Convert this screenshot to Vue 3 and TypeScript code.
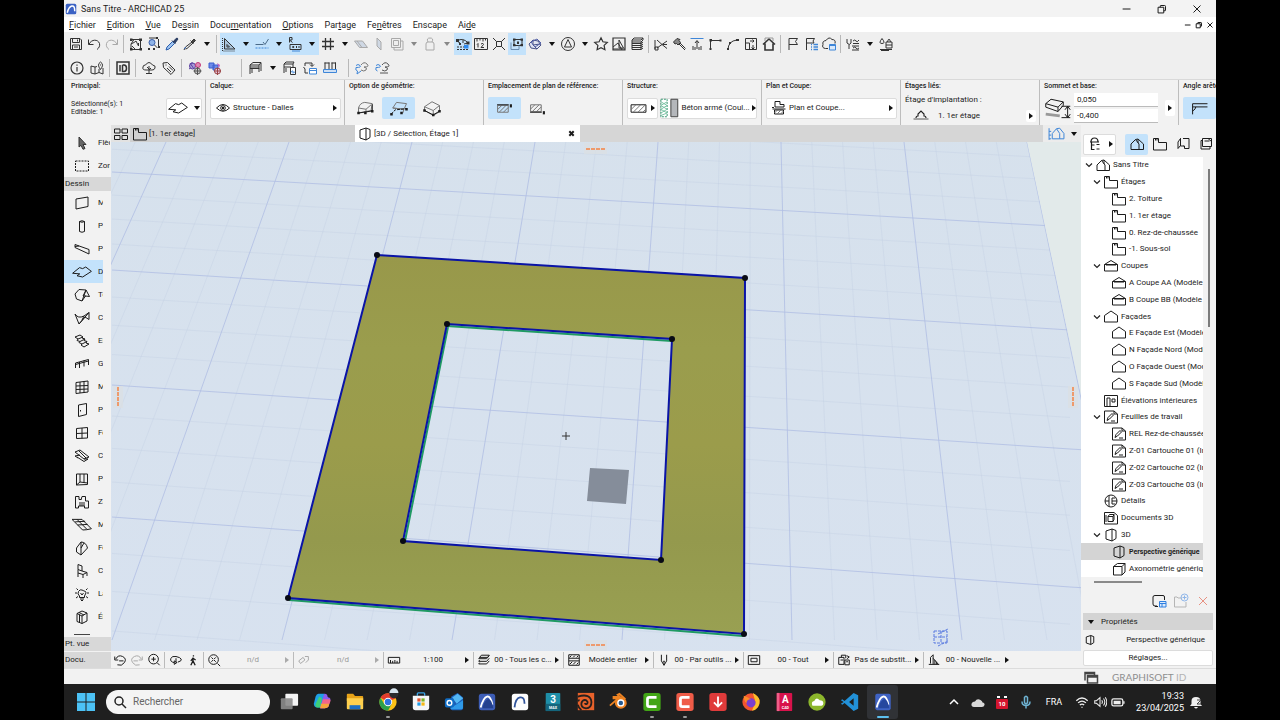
<script setup lang="ts">
import { h } from 'vue'

const P = (d: string, extra = '') => `<path d="${d}" ${extra}/>`
const BLUE = 'stroke="#3f86d8"'
const SOLID = 'fill="currentColor" stroke="none"'

const icons: Record<string, string> = {
  // window controls
  min: P('M3 8h9'),
  restore: P('M3.5 6h6.500v6.500h-6.500zM6 6V4.500Q6 4 6.500 4H11q1 0 1 1v4.500q0 .5-.5 .5H10'),
  close: P('M4 4l8 8M12 4l-8 8'),
  bigclose: P('M3 3l10 10M13 3l-10 10'),
  // standard toolbar
  save: P('M2.500 2.500h9.500l1.500 1.500v9.500h-11zM4.500 2.500v4h7v-4M4.500 13.500v-4.500h7v4.500M6 11h4M9.500 3.500v2'),
  undo: P('M2.500 3.500v5h5M3 8.200C5.500 3 12 3 13.500 7.500c.6 2.500-.5 4.500-2.500 6'),
  redo: P('M13.500 3.500v5h-5M13 8.200C10.500 3 4 3 2.500 7.500c-.6 2.500.5 4.500 2.500 6'),
  edit: P('M4 3.500h8M12.500 5v8M4 13.500h8M3 8v5M6 3.500L3 8l3-1.500 2-1.500 1 2 1.500 3V7M4 10l3 3') + P('M2 2.500h2.500v2.500H2zM11 2.500h3V5h-3zM2 12h2.500v2.500H2zM11.500 12H14v2.500h-2.500z', SOLID),
  findsel: P('M6 6.500m-3 0a3 3 0 1 0 6 0a3 3 0 1 0 -6 0', 'fill="#8fb4e8" stroke="#3a5ea8"') + P('M3 2h8M12.500 3v8M8.500 9l3 3') + P('M10 1h2v2h-2zM12 10h2v2h-2zM2 12h2v2H2zM7 12h2v2H7z', SOLID),
  pick: P('M2 14l1-3 5.500-5.500 2 2L5 13z', 'fill="#9fc4f0" stroke="#2c5fae"') + P('M8 4.500l3.500 3.500M9 6l3-3.500q1.500-1 2 .5L11 7', 'fill="#2b3e63" stroke="#2b3e63"'),
  inject: P('M2 14l1.500-3L10 6M3.500 13L5 12.500 11 7M8.500 4.500l3 3') + P('M9 6l3-3 1.500 1.500L11 7z', 'fill="#444"') + P('M2 13l2-2', 'stroke="#2c5fae"'),
  setsq: P('M3.500 2.500v10.500h10.500zM6 8.500v2.500h2.500z', 'fill="#a9c4dc" fill-rule="evenodd"') + P('M1.500 2v13h13', 'stroke-dasharray="1 1"'),
  guide: P('M1.500 8.500h8M9 6l2 2.500 3.500-5.500', 'stroke="#4a6a88"') + P('M1.500 12h13', 'stroke-dasharray="2 1" stroke="#3f86d8"'),
  coord: P('M2.500 1.500v5M2.500 1.500h2.500v2.500H2.500l3 2.500M3 8.500h11v5H3zM5.500 10l1.500 2M7 10l-1.500 2M9.500 10v2M12 10v2') + P('M5 15h8', BLUE),
  grid: P('M5.500 2v12M10.500 2v12M2 5.500h12M2 10.500h12', 'stroke-width="1.300"'),
  plane1: P('M1.500 5h8l5 6.500h-8zM4 5l5 6.500', 'fill="#cfd8e4"'),
  plane2: P('M6 2l4 4v8L6 10z', 'fill="#cfd8e4"'),
  layers: P('M2.500 2.500h9v9h-9zM5 11.500V14h9V5h-2.500M4.500 4.500h5v5h-5z'),
  lock: P('M4 8q0-2 2-2h4q2 0 2 2v6H4zM6 6q-2-4 2-4t2 4'),
  suspend: P('M2 5q6-4 11 2M2 5l3 2M8 4v3M13 7l-4 1') + P('M1 3h3v3H1zM11.500 5.500h3v3h-3zM4 7h2v2H4z', SOLID) + P('M2 11h8M2 13.500h12', 'stroke-dasharray="2 1"') + P('M9 9h4.500v3.500H9z', 'fill="#2f8cf0" stroke="none"'),
  measure: P('M1.500 2.500h13v11h-13zM4 2.500v3M7 2.500v2M10 2.500v3M12.500 2.500v2M4 8.500l1-1v4M8 8q2.500-1.500 2.500.5L8 11.500h3'),
  snap: P('M5.500 5.500h5v5h-5zM2 2l3.500 3.500M14 2l-3.500 3.500M2 14l3.500-3.500M14 14l-3.500-3.500'),
  group: P('M5 3.500h8v6H5z') + P('M2 6.500v7h8v-4', 'stroke="#6b8db0"') + P('M4 2.500h2.500v2.300H4zM11.500 2.500H14v2.300h-2.500zM4 8h2.500v2.300H4zM11.500 8H14v2.300h-2.500zM8 5.500h2V8H8z', SOLID),
  cutplane: P('M2 8l4-4 5 1 3 4-4 4-6-1zM6 4v5l4 4M6 9l7-1', 'stroke="#4a5488" fill="#dfe3f2"') + P('M4 6l6-3 4 4-6 4z', 'stroke="#5361a8"'),
  north: P('M8 8m-6.500 0a6.500 6.500 0 1 0 13 0a6.500 6.500 0 1 0 -13 0M8 3.500l3.500 7.500h-7z'),
  star: P('M8 1.800l1.900 4 4.400.6-3.200 3 .8 4.300L8 11.600l-3.900 2.100.8-4.300-3.200-3 4.400-.6z', 'stroke-width="1.200"'),
  pic: P('M2 2h12v12H2z', 'stroke-width="1.200"') + P('M2 11l5-4 4 7M8 4v8h4.500zM2 13h12'),
  stack: P('M3 4l2-2h9l-2 2zM3 4v2h9l2-2V2M3 7.500h9l2-1.500M3 9.500h9l2-1.500M3 11.500h9l2-1.500M3 13.500h9l2-1.500M3 6v7.500M12 6v7.500'),
  cut: P('M4 4l5 4.500L14 5M4 12l5-3.500 5 4M10 8.500h4M2 4v9') + P('M2 11h3v3H2z'),
  hammer: P('M6.500 6.500L14 14M8 6l6.500 6.500') + P('M2.500 6L6 2.500l3 1-1 1 1.500 2-2.500 2.500L5.500 7.500 4 8z', 'fill="#888"'),
  elev: P('M1.500 2.500h13', BLUE) + P('M8 13V5M6 7l2-2.500L10 7M4 10v4M6 11v3M10 11v3M12 10v4'),
  corner: P('M3.500 14V4.500H14') + P('M2.500 3h2.500v2.500H2.500zM12.500 3.500h2v2h-2zM2.500 12h2v2h-2z', SOLID),
  arc: P('M3 14Q3 5 12 4') + P('M2 12h2v2H2zM11 3h3v2h-3zM4 6h2v2H4z', SOLID),
  resize: P('M2.500 2.500h11v11h-11zM2.500 7h4v6.500M7 5h4M9.500 3.500L11 5 9.500 6.500M10 9v4M8.500 11.500L10 13l1.500-1.500'),
  home: P('M2 8.500L8 3l6 5.500M4 7.500V14h8V7.500', 'stroke-width="1.600"') + P('M4 5V2h8v3', 'stroke="#999"'),
  flag: P('M4 14V2.500h8.500l-2 3 2 3H4'),
  flaglist: P('M3.500 14V2.500h8l-1.500 2.500 1 2H3.500') + P('M8 8.500h1M10.500 8.500H15M8 11h1M10.500 11H15M8 13.500h1M10.500 13.500H15', 'stroke="#3f86d8" stroke-width="1.500"'),
  cloudissue: P('M7 12.500H4.500q-4-.5-2.500-4Q1 5 5 4.500 8 0 11 3.500q4 0 3 4') + P('M8.500 8.500h6v5.500h-6z', 'fill="#d9e9fb" stroke="#3f86d8"') + P('M8.500 9.500h6', BLUE),
  tuning: P('M2 3v4q2.500 3 4 0V3M4 8.500V13M8 5q2-2 3 0t3-1M8 7.500h6M7 10h7M8 12q2-2 3 0t3 0M7 14h7'),
  paint: P('M4 2.500q-4 5 0 5t0-5M8 6h6v6H8zM9.500 6q1.500-6 3 0M8 9h6M2 13.500h12M3 14.500h8'),
  // second toolbar
  info: P('M8 8m-6 0a6 6 0 1 0 12 0a6 6 0 1 0 -12 0M8 7v4.500M8 4.500v1.200', 'stroke-width="1.200"'),
  mappin: P('M2 6l4 1v7l-4-1zM6 14l4-1.500V9M10 12.500l4 1.500V8M6 7l2-.5M11.500 9.500q-4-5 0-7.500 4 2.500 0 7.500M11.500 4.500v1'),
  id: P('M2 2h12v12H2z', 'stroke-width="1.500"') + P('M5 5v6.500M7.500 5v6.500h1.500q2.500 0 2.500-3.200T9 5H7.500', 'stroke-width="1.500"'),
  tree: P('M5 10q-4 0-3-3 0-2 2.500-2Q8 0 11.500 5 15 5.500 14 8q-.5 2-3 2zM8 6v7M8 10l2-2M8 9L6 7M5 13.500h6'),
  tag: P('M2 3l4.500-.5L14 10l-4 4.500L2.500 7.500zM4.500 5h1M6 8l4 4M8 6.500l4 4'),
  gears1: P('M5.500 6m-3 0a3 3 0 1 0 6 0a3 3 0 1 0 -6 0M5 2v2M2 9l1.500-1M3 3l4 6', 'stroke="#5a3fa0" fill="#a99bd8"') + P('M11 5m-2.500 0a2.500 2.500 0 1 0 5 0a2.500 2.500 0 1 0 -5 0', 'stroke="#c43a7a" fill="#e08ab4"') + P('M10.500 11m-3 0a3 3 0 1 0 6 0a3 3 0 1 0 -6 0M10.500 7v8M6.500 11h8', 'stroke="#555" fill="#ccc"'),
  gears2: P('M2 3h5v5H2zM6 5h5v5H6z', 'stroke="#3b5fd0" fill="#6f8be8"') + P('M10 3l3 2-1 3z', 'fill="#c060c0" stroke="none"') + P('M10.500 11m-3 0a3 3 0 1 0 6 0a3 3 0 1 0 -6 0M7 11h7M10.500 8v7', 'stroke="#944" fill="#e6c4dc"'),
  desk: P('M3 5l3-2.500h8L12 5zM3 5v9M3 8.500h9V5M12 8v4M14 3v8M5 9v4M3 7h9'),
  deskdoc: P('M2 4l2-2h8l-1 2zM2 4v9M2 7h7M4 8v4M11 4v3') + P('M8.500 7.500h5v7h-5z', 'fill="#fff"') + P('M10.500 10.500L9.500 12h3L11 13.500', BLUE),
  swap: P('M3 6V3h7v3M8 4.500L10 6.500l2-2M3 9l-1.500-2M3 9v4h3') + P('M7.500 8.500h7v5.500h-7zM7.500 10.500h7', 'fill="#fff" stroke="#3f86d8"'),
  tubes: P('M3 2.500v10M7 2.500v10M10 2.500v10M13.500 2.500v10M2.500 3h5M9.500 3H14') + P('M1.500 9.500h13v3h-13z', 'fill="#cfe0f4" stroke="#3f86d8"'),
  link1: P('M7 5q3-4 6-1t-3 3q4 1 2 3t-5 0', 'stroke="#777"') + P('M2 5.500q2-2 4 0t-4 2q-1 3 1.500 3.500L3 14l4-3', BLUE),
  link2: P('M8 5q3-4 6-1t-3 3q4 1 2 3t-5 0M6 13h8', 'stroke="#555"') + P('M2 5.500q2-2 4 0t-4 2q-1 3 1.500 3.500', BLUE),
  // element and placement icons
  slab: P('M.5 9L6 4.500l2.500.800L11 4l4.500 3.500L8.500 12l-4.500-1 2.200-1.500z'),
  eye: P('M1.500 8q6.500-7 13 0-6.500 6.500-13 0zM8 8m-2.300 0a2.300 2.300 0 1 0 4.600 0a2.300 2.300 0 1 0 -4.600 0') + P('M7 7h2v2H7z', SOLID),
  geo1: P('M2 8q1-4 5-4.500l6 1-1 5.500M2 8l6 1 4-3.500M2 8v4l10-2M8 9v2', 'stroke="#777"') + P('M2 12l10-1.500M13 5v6') + P('M1 11h2v2H1zM6.500 11h2v2h-2zM12 9.500h2v2h-2z', SOLID),
  geo2: P('M3 8l3-4.500 8 1L12 9zM3 8l9 1-1 3', 'stroke="#777"') + P('M1.500 13L5 9.500l9-1', 'stroke-dasharray="3 1"') + P('M1 12h2v2H1zM13 8h2v2h-2zM9 11h2v2H9z', SOLID),
  geo3: P('M2 7l6-4 6 3-5 4zM2 7v3l7 4V10M14 6v5L9 14', 'stroke="#777"') + P('M2 10l7 3.500 5-3') + P('M1 9h2v2H1zM8 12.500h2v2H8zM13 9.500h2v2h-2z', SOLID),
  hatchtop: P('M1.500 5h10v6.500h-10zM1.500 9l4-4M3 11.500L9.500 5M7 11.500L11.500 7', 'stroke="#777"') + P('M1 4.500H12') + P('M13 4h2v3h-2z', SOLID),
  hatchbot: P('M1.500 4.500h10v6.500h-10zM1.500 8.500l4-4M3 11L9.500 4.500M7 11l4.500-4.500', 'stroke="#777"') + P('M1 11.500H12') + P('M13 10.500h2v3h-2z', SOLID),
  hatch: P('M1 4.500h14v7H1z') + P('M1 9l4.500-4.500M3 11.500l7-7M7.500 11.500l7-7M12 11.500l3-3', 'stroke="#777"'),
  mat: P('M1.500 1h5v14h-5z', 'stroke="#3e9a76" stroke-dasharray="2 1"') + P('M1.500 3l5 3-5 3 5 3-5 2M6.500 3l-5 3 5 3-5 3', 'stroke="#7cc4a6"') + P('M9.500 1h5.500v14H9.500z', 'fill="#b4b7bb" stroke="#444"'),
  plansec: P('M4 1.500h5v3h4v2.500H4zM1 7.500h2M1.500 9h13M3.500 10h9v4h-9z') + P('M3.500 13l3-3M6 14l4-4M9.500 14l3-3', 'stroke="#777"'),
  story: P('M3 10q0-2 2-2V6l3-3 3 3v2q2 0 2 2', 'stroke-width="1.100"') + P('M.5 11h15', 'stroke="#888" stroke-width="1.500"'),
  height: P('M1 5.500L4 3l7 1.500-3 3zM1 5.500v2l7 2.500v-2.500M11 4.500v2L8 10') + P('M1 11.500l8 1', 'stroke="#999" stroke-width="3"') + P('M10 7h5M10 13.500h5M13.500 7v6.500M12 9L13.500 7 15 9M12 11.500l1.500 2 1.500-2'),
  edge: P('M1.500 3.500h14M1.500 6.500h14M1.500 3.500v10M4.500 6.500q0 2-3 4'),
  tiles: P('M1.500 3h5.500v4H1.500zM9 3h5.500v4H9zM1.500 9.500h5.500v4H1.500zM9 9.500h5.500v4H9z'),
  storytab: P('M1.500 2.500h5v4h8v7.500h-13zM3.500 2.500v2M5 2.500v2'),
  box3d: P('M3 4l6-2v12l-6-2zM9 2l4 1.500v8L9 14'),
  navhouse: P('M4 13V8l4-4.500L11 8v5zM8 3.500l3-.5 4 5v5h-4M1 3v11M1 6h2M1 9.500h2M1 13h2', BLUE),
  // toolbox
  arrow: P('M5 2l7 7.500H9l2 4-2 .8-2-4L5 12z', 'fill="#666" stroke="#333"'),
  marquee: P('M1.500 3h13v10h-13z', 'stroke-dasharray="2 1"'),
  wall: P('M2 4l12-2v9.500L2 14z'),
  column: P('M5.500 3.500v10q2.500 1.500 5 0v-10q-2.500-1.500-5 0 2.500 1.500 5 0'),
  beam: P('M1 3.500l14 5v4.500L1 6.500zM1 5.500l4-.5'),
  roof: P('M1 7l4-4.500 7 .5 3.500 6.500-4-.5L8 14l-5.500-2zM12 3L8 14M12 3l-3 6h3'),
  shell: P('M1 4q3 5 9 2l5-3.500v7L11 7l-6 7zM15 2.500L5 14M10 6L8 10'),
  stair: P('M1 4l5-2 3 2-1 1 3 1-1 1.500 3 1-1 1.500 3 1-5 3-3-2 1-1-3-1.500 1-1L3 7.500 4 6zM4 6l5-2M6 8.500l5-2.500M8 11l5-2.500'),
  rail: P('M1.500 12V7L14.500 3.500V9M5.500 6v6M10 4.500v6M1.500 8.500L14.500 5'),
  curtain: P('M2 3.500L14 2v11L2 14.500zM6 3v11M10 2.500v11M2 7l12-.5M2 10.500l12-.5'),
  door: P('M4.500 3l8-1.500v11l-8 2zM6.500 8v1.500'),
  window: P('M2.500 3.500l11-1V13l-11 .5zM8 3v10.500M2.500 8.500l11-.5'),
  skylight: P('M1 4l5-2 9 7-5 2zM1 8l5-1M10 11l4 0M3 9l7 4.500 4-2.500M1 8l3 2M5 3l7 7'),
  opening: P('M2.500 3h11v10.500l-11 .5zM6 3v8l7.500 1M6 11l-3.500 3M10 3v8.500'),
  zone: P('M1.500 2.500h3.500v3h2M1.500 2.500V14h3v-2h6v2h4V7h-3V2.500h-3.500L7 6M5 9h6M5 11h6'),
  mesh: P('M0 3.500q4 0 8 0l7.500 7.500q-4 1-7 1zM4 3.500l8 8M2.500 5.500l8-.5M4.500 8l8-.5'),
  morph: P('M7 2L2.500 8v4l4.500 3V8zM7 2q5 0 6.500 6L7 15M7 8l3-5'),
  chair: P('M4 1.500l4 1.500v5L4 6.500zM4 6.500V14M8 8l5 1.500M4 10l5 1.500 4-2V13M9 11.500V15'),
  lamp: P('M5.500 10Q3 8 4.500 5.500T8 4t3.500 1.500-1 4.500v1.500h-5zM6 13h4M7 14.500h2M1 7h2M13 7h2M2.500 2.500L4 4M13.500 2.500L12 4M2 12l2-1.500M14 12l-2-1.500M6.500 7L8 9l1.500-2'),
  element: P('M3 4.500L8 2l5 2v8L8 14.500 3 12.500zM3 4.500L8 7l5-3M8 7v7.500M5.500 5.500v8M5 3.500L10 6'),
  // navigator
  navtop: P('M4 6q0-4 3.500-4T11 6M3 6h9M4.500 9h3M4.500 6v7.500h3M9.500 8.500h3M9.500 13h3', 'stroke-width="1.200"'),
  house: P('M2 13.500V8l4.500-4.500L10 8v5.500zM6.500 3.500L9 3l5.500 5v5.500H10M9 3v4'),
  layoutbook: P('M3 12.500V6l2.500-3.500V9.500L3 12.500M5.500 2.500V10H9M8 2.500h6v10H9.500M9.500 12.500v-2.500h-1'),
  publish: P('M4.500 2.500h9v8h-9zM4.500 4.500H3v8.500h9v-2.500M6.500 5h5M10 2.500l3.500 3'),
  section: P('M1.500 6.500L8 2.500l6.500 4V13h-13zM3 7h10M1.500 6.500h13'),
  facade: P('M1.500 6.500L8 2l6.500 4.500V13h-13z'),
  interior: P('M1.500 2.500h13v11h-13zM4 5h3v8.500M4 5v8.500M9 6h3v3H9z'),
  sheet: P('M1.500 2h9.500l3.500 3v9h-13zM11 2v3h3.500M4 11.500l1-3 4-4 1.500 1.500-4 4zM8 12h4'),
  detail: P('M8 8m-6 0a6 6 0 1 0 12 0a6 6 0 1 0 -12 0M6 2.500v11M9 5v6M9 8h5M9 5h3.500M9 11h3.500M2 8h4'),
  doc3d: P('M1.500 2.500H11l3.500 3V14h-13zM5 6.500h5v5H5zM5 6.500l1.500-2H11l-1 2M11 4.500v5L10 11.500M3 5v7'),
  axo: P('M2.500 5.500l4-3h7.500l-3 3zM2.500 5.500V14H11V5.500M14 2.500V11l-3 3'),
  viewnew: P('M6 13H4q-2 0-2-2V4q0-1.500 2-1.500h8q1.500 0 1.500 1.500v3M4 13.500h3') + P('M8.500 8.500H15V14H8.500zM8.500 10.500H15M11 10.500V14', 'stroke="#2f7fe0" fill="#dcebfc"'),
  foldernew: P('M9 5H5L4 4H1.500v10H13V9') + P('M11.500 4.500m-3.500 0a3.500 3.500 0 1 0 7 0a3.500 3.500 0 1 0 -7 0M11.500 2.500v4M9.500 4.500h4', 'stroke="#8eb6ea"'),
  windows: P('M4.500 6.500h10V14h-10zM4.500 8h10M2 11.500V3.500h9.500V6M2 4.500h9.500', 'stroke-width="1.500"'),
  // view bar
  zback: P('M2 4v4h4M3 7Q6 1.500 11 4t2 7-8 2.500M7 9h5'),
  zfwd: P('M14 4v4h-4M13 7Q10 1.500 5 4T3 11t8 2.500M4 9h5'),
  zin: P('M7.500 7m-5.500 0a5.500 5.500 0 1 0 11 0a5.500 5.500 0 1 0 -11 0M11.500 11l3 3M7.500 4.500v5M5 7h5'),
  orbit: P('M6 11Q1 10 2 6.500T8 4t6 3-4 3.500M6 9v4l3-2zM8 6v5'),
  walk: P('M8.500 2.500v1.500M8 5v4l-2.500 5M8 9l2.500 5M8 6L5.500 9M8 6l3 2', 'stroke-width="1.300"'),
  fit: P('M7.500 7.500m-5.500 0a5.500 5.500 0 1 0 11 0a5.500 5.500 0 1 0 -11 0M12 12l3 3M5 5l2 2M10 5L8 7M5 10l2-2M10 10L8 8'),
  rotate: P('M2 9l5-4 2 3-5 4zM9 4h4v4M13 8l-3 3'),
  scale: P('M1.500 5h13v6.500h-13zM4 8v3.500M6.500 9v2.500M9 8v3.500M11.500 9v2.500'),
  sheets: P('M3 5l2-2.500h9L12 5zM3 8l-1 1.500h9L14 6M3 11l-1 1.500h9L14 9M3 5l-1 1.500h9L14 3'),
  cells: P('M2 2h12v12H2z') + P('M2 6h12M2 9h12M3 5l2-2M7 5l2-2M11 5l2-2M3 13l3-3M7 13l3-3M11 13l2-2'),
  pen: P('M5 2v7l3 5 3-5V2M7 9.500h2M8 10v4'),
  frame: P('M1.500 3h13v10h-13zM4.500 6h7v4h-7z'),
  override: P('M2 5h6v8H2zM5 5V2.500h5V6M9 8h5v5.500H9zM11 3l3 1.500-2.500 2M4 8h3M10.500 10h2'),
  reno: P('M2 13h12M4 12V5l3-3v11M7 6l6 7M9 8v5M11 10v3'),
}

const Ico = (p: { n: string }) =>
  h('svg', { class: 'ico', viewBox: '0 0 16 16', 'aria-hidden': 'true', innerHTML: icons[p.n] })

const menus = [
  ['', 'F', 'ichier'], ['', 'E', 'dition'], ['', 'V', 'ue'], ['De', 's', 'sin'], ['Docu', 'm', 'entation'],
  ['', 'O', 'ptions'], ['Par', 't', 'age'], ['Fe', 'n', 'êtres'], ['Enscape', '', ''], ['Ai', 'd', 'e'],
]

// '|' is a separator, '>' a drop-down arrow, '*' marks an active button, '~' a disabled one, '_' and '.' are gaps
const bar1 = ['save', 'undo', '~redo', '|', 'edit', 'findsel', 'pick', 'inject', '>', '|', '*setsq', '*>', '*guide', '*>', '*coord', '*>',
  'grid', '>', '~plane1', '~plane2', '~layers', '~>', '~lock', '~>', '*suspend', 'measure', 'snap', '*group', 'cutplane', '>', 'north', '>',
  'star', 'pic', 'stack', '|', 'cut', 'hammer', 'elev', 'corner', 'arc', 'resize', 'home', '|', 'flag', 'flaglist', 'cloudissue', '|',
  'tuning', '>', 'paint']
const bar2 = ['info', 'mappin', '|', 'id', '|', 'tree', 'tag', '|', 'gears1', 'gears2', '_', '|', 'desk', '>', 'deskdoc', 'swap', 'tubes', '.', '|', 'link1', 'link2']
const parse = (s: string) => ({
  on: s[0] === '*',
  off: s[0] === '~',
  name: s.replace(/^[*~]/, ''),
})
const rows = [bar1.map(parse), bar2.map(parse)]

const tools = [
  ['wall', 'Mur'], ['column', 'Poteau'], ['beam', 'Poutre'], ['slab', 'Dalle'], ['roof', 'Toit'], ['shell', 'Coque'],
  ['stair', 'Escalier'], ['rail', 'Garde-corps'], ['curtain', 'Mur-rideau'], ['door', 'Porte'], ['window', 'Fenêtre'],
  ['skylight', 'Châssis'], ['opening', 'Percement'], ['zone', 'Zone'], ['mesh', 'Maillage'], ['morph', 'Forme'],
  ['chair', 'Chaise'], ['lamp', 'Lampe'], ['element', 'Élément'],
]

interface Node { l: number; i: string; t: string; open?: boolean; sel?: boolean }
const nodes: Node[] = [
  { l: 0, i: 'house', t: 'Sans Titre', open: true },
  { l: 1, i: 'storytab', t: 'Étages', open: true },
  { l: 2, i: 'storytab', t: '2. Toiture' },
  { l: 2, i: 'storytab', t: '1. 1er étage' },
  { l: 2, i: 'storytab', t: '0. Rez-de-chaussée' },
  { l: 2, i: 'storytab', t: '-1. Sous-sol' },
  { l: 1, i: 'section', t: 'Coupes', open: true },
  { l: 2, i: 'section', t: 'A Coupe AA (Modèle' },
  { l: 2, i: 'section', t: 'B Coupe BB (Modèle' },
  { l: 1, i: 'facade', t: 'Façades', open: true },
  { l: 2, i: 'facade', t: 'E Façade Est (Modèle' },
  { l: 2, i: 'facade', t: 'N Façade Nord (Modèle' },
  { l: 2, i: 'facade', t: 'O Façade Ouest (Modèle' },
  { l: 2, i: 'facade', t: 'S Façade Sud (Modèle' },
  { l: 1, i: 'interior', t: 'Élévations intérieures' },
  { l: 1, i: 'sheet', t: 'Feuilles de travail', open: true },
  { l: 2, i: 'sheet', t: 'REL Rez-de-chaussée' },
  { l: 2, i: 'sheet', t: 'Z-01 Cartouche 01 (Ind' },
  { l: 2, i: 'sheet', t: 'Z-02 Cartouche 02 (Ind' },
  { l: 2, i: 'sheet', t: 'Z-03 Cartouche 03 (Ind' },
  { l: 1, i: 'detail', t: 'Détails' },
  { l: 1, i: 'doc3d', t: 'Documents 3D' },
  { l: 1, i: 'box3d', t: '3D', open: true },
  { l: 2, i: 'box3d', t: 'Perspective générique', sel: true },
  { l: 2, i: 'axo', t: 'Axonométrie générique' },
]

const options = [
  { i: 'fit', t: 'n/d', off: true }, { i: 'rotate', t: 'n/d', off: true, dim: true }, { i: 'scale', t: '1:100' },
  { i: 'sheets', t: '00 - Tous les c...' }, { i: 'cells', t: 'Modèle entier' }, { i: 'pen', t: '00 - Par outils ...' },
  { i: 'frame', t: '00 - Tout' }, { i: 'override', t: 'Pas de substit...' }, { i: 'reno', t: '00 - Nouvelle ...' },
]

// Ground grid: main lines with three finer ones between each pair
const across = [[86, 138], [172, 227], [270, 330], [385, 449], [517, 587], [672, 745]]
let minorGrid = ''
let majorGrid = ''
for (let i = -4; i <= 28; i++) {
  const d = `M${166 + (i * 123) / 4} 142L${-58 + (i * 170) / 4} 640`
  if (i % 4 === 0) majorGrid += d
  else minorGrid += d
}
across.forEach(([a, b], i) => {
  majorGrid += `M112 ${a}L1070 ${b}L1120 ${b + 3}`
  const next = across[i + 1]
  if (!next) return
  for (let s = 1; s < 4; s++) {
    const t = s / 4 - (s === 2 ? 0.02 : 0.015)
    minorGrid += `M112 ${a + (next[0] - a) * t}L1070 ${b + (next[1] - b) * t}`
  }
})

const apps: { n: string; svg: string; run?: boolean; active?: boolean }[] = [
  { n: 'Vue des tâches', svg: '<rect x="7" y="3" width="14" height="13" rx="1" fill="#f4f4f4"/><rect x="2" y="8" width="13" height="12" rx="1" fill="#8b8b8b" opacity=".9"/>' },
  { n: 'Copilot', svg: '<path d="M7 3h7l-4 15H6q-4 0-4-4l2-8q1-3 3-3z" fill="#1ea0e8"/><path d="M4 14l4-8 3 2-2 10H6q-3 0-2-4z" fill="#3ecf78"/><path d="M14 3q3 0 3 3l1 1q3 0 2 4l-2 6q-1 2-4 2H9l4-15z" fill="#8b5cf0"/><path d="M12 9h7q2 0 1 3l-2 5q-1 2-4 2H9z" fill="#f2668b"/><path d="M10 14h9l-1 3q-1 2-4 2H9z" fill="#f6a63c"/>' },
  { n: 'Explorateur', svg: '<path d="M2 4q0-1 1-1h6l2 2.500h8q1 0 1 1V11H2z" fill="#e8a318"/><path d="M2 8h18v11q0 1-1 1H3q-1 0-1-1z" fill="#ffd04e"/><path d="M5 15.500h12V20H5z" fill="#1d6fc4"/>' },
  { n: 'Chrome', run: true, svg: '<circle cx="11" cy="12" r="9.500" fill="#fbc116"/><path d="M11 12L2.800 7.200A9.500 9.500 0 0 1 19.200 7.200L19.500 8z" fill="#e33b2e"/><path d="M2.800 7.200A9.500 9.500 0 0 0 11 21.500l4-7.300-8 .4z" fill="#2da04c"/><circle cx="11" cy="12" r="4.600" fill="#fff"/><circle cx="11" cy="12" r="3.600" fill="#2f74e0"/><circle cx="17.500" cy="3" r="5" fill="#2c2c30"/><path d="M12.500 2a5 5 0 0 1 10 0z" fill="#d6e4ee"/>' },
  { n: 'Microsoft Store', svg: '<path d="M7 5V3q0-1 1-1h6q1 0 1 1v2" fill="none" stroke="#3aa3e6" stroke-width="1.500"/><path d="M2 5h18v13q0 3-3 3H5q-3 0-3-3z" fill="#f5f6f8"/><path d="M7 8h3.500v3.500H7z" fill="#e5502c"/><path d="M11.500 8H15v3.500h-3.500z" fill="#7bb526"/><path d="M7 12.500h3.500V16H7z" fill="#1f9be8"/><path d="M11.500 12.500H15V16h-3.500z" fill="#f6b817"/>' },
  { n: 'Outlook', svg: '<path d="M8 6l7-4 6 5v12q0 2-2 2H9q-2 0-2-2z" fill="#1b5fb8"/><path d="M9 7l6-4 6 5-7 6z" fill="#53b7f3"/><path d="M7 19l14-9v8q0 2-2 2H8z" fill="#2f9ae9"/><rect x="1" y="8" width="10" height="10" rx="2" fill="#0f6cc4"/><circle cx="6" cy="13" r="2.600" fill="none" stroke="#fff" stroke-width="1.500"/>' },
  { n: 'ARCHICAD', svg: '<rect x="2" y="3" width="18" height="18" rx="3" fill="#3d5db6"/><path d="M4 18Q7 7 11 6t6 9" fill="none" stroke="#fff" stroke-width="2"/><path d="M6 19Q8 10 12 9t6 10z" fill="#24418f"/>' },
  { n: 'ARCHICAD Start', svg: '<rect x="2" y="3" width="18" height="18" rx="3" fill="#fdfdfd"/><path d="M5 18Q6 8 11 7q5-1 5 7" fill="none" stroke="#31549b" stroke-width="2"/>' },
  { n: '3ds Max', svg: '<rect x="3" y="2" width="16" height="20" rx="1" fill="#1e8ea8"/><path d="M3 14h16v8H3z" fill="#14657c"/><text x="11" y="13" text-anchor="middle" font-size="11" font-weight="700" fill="#fff">3</text><text x="11" y="20" text-anchor="middle" font-size="4" font-weight="700" fill="#fff">MAX</text>' },
  { n: 'Houdini', svg: '<path d="M2 2h18v19H2z" fill="#e8622b"/><path d="M2 6q14-4 15 6 0 7-6 7-6-1-5-6 1-4 5-3 3 2 1 4-2 1-2-1M2 11q1-1 2-1M2 15q1 4 4 6" fill="none" stroke="#26201e" stroke-width="2"/>' },
  { n: 'Blender', svg: '<circle cx="13" cy="13" r="6.500" fill="#ee8322"/><circle cx="13" cy="13" r="4" fill="#fff"/><circle cx="13" cy="13" r="2.500" fill="#265a92"/><path d="M1 16l9-8H5V6.500h7L9.500 4l2-1L18 9" fill="none" stroke="#ee8322" stroke-width="2"/>' },
  { n: 'Camtasia', run: true, svg: '<rect x="1.500" y="2" width="19" height="20" rx="3" fill="#42a516"/><path d="M16 7H8q-2 0-2 2v6q0 2 2 2h8" fill="none" stroke="#fff" stroke-width="3"/>' },
  { n: 'Camtasia Recorder', run: true, svg: '<rect x="1.500" y="2" width="19" height="20" rx="3" fill="#ef5c48"/><path d="M16 7H8q-2 0-2 2v6q0 2 2 2h8" fill="none" stroke="#fff" stroke-width="3"/>' },
  { n: 'Téléchargements', svg: '<rect x="1.500" y="2" width="19" height="20" rx="3" fill="#e03b3b"/><path d="M11 6v11M6.500 12.500l4.500 4.500 4.500-4.500" fill="none" stroke="#fff" stroke-width="2"/>' },
  { n: 'Firefox', svg: '<circle cx="11" cy="12" r="9.500" fill="#f4552f"/><path d="M13 2q6 3 7.500 8Q21 20 12 21.500L16 12z" fill="#fbbf2b"/><circle cx="11" cy="13" r="5" fill="#7a3fd0"/><path d="M3 5q3 1 8 4-5 0-5 4-3-2-3-8z" fill="#fb8c2a"/>' },
  { n: 'AutoCAD', svg: '<rect x="3" y="2" width="17" height="20" rx="1" fill="#d8124b"/><path d="M3 2h3v20H3z" fill="#ef5e88"/><text x="12.500" y="13" text-anchor="middle" font-size="11" font-weight="700" fill="#fff">A</text><text x="12.500" y="20" text-anchor="middle" font-size="4" font-weight="700" fill="#fff">CAD</text>' },
  { n: 'Itinéraires', svg: '<circle cx="11" cy="12" r="9.500" fill="#8cb62c"/><path d="M6 16q-2-4 2-5 2-5 6-1 4 0 4 3.500 0 2.500-2 2.500z" fill="#fff"/>' },
  { n: 'VS Code', svg: '<path d="M15 2l5 2.500v15L15 22 5 13l-2.500 2L1 14l3-2-3-2 1.500-1L5 11zM15 8l-5 4 5 4z" fill="#2291d8" fill-rule="evenodd"/>' },
  { n: 'ARCHICAD 25', active: true, svg: '<rect x="2.500" y="3" width="17" height="18" rx="2" fill="#3f63c4"/><path d="M4 18Q7 7 11 6t6 9" fill="none" stroke="#fff" stroke-width="2"/><path d="M6 19Q8 10 12 9t6 10z" fill="#26479e"/>' },
]
</script>

<template>
  <div class="screen">
    <header class="title">
      <svg class="logo" viewBox="0 0 16 16"><rect x="1" y="1" width="14" height="14" rx="2" fill="#3b62c4" /><path d="M3 13Q5 5 9 4t4 7" fill="none" stroke="#fff" stroke-width="2" /></svg>
      <h1>Sans Titre - ARCHICAD 25</h1>
      <div class="wctl">
        <button aria-label="Réduire"><Ico n="min" /></button>
        <button aria-label="Restaurer"><Ico n="restore" /></button>
        <button aria-label="Fermer"><Ico n="close" /></button>
      </div>
    </header>
    <nav class="menu">
      <button v-for="m in menus" :key="m[0] + m[1] + m[2]">{{ m[0] }}<u>{{ m[1] }}</u>{{ m[2] }}</button>
      <div class="dctl">
        <button aria-label="Réduire le document"><Ico n="min" /></button>
        <button aria-label="Restaurer le document"><Ico n="restore" /></button>
        <button aria-label="Fermer le document"><Ico n="close" /></button>
      </div>
    </nav>

    <div v-for="(row, r) in rows" :key="r" class="bar" :class="{ second: r === 1 }">
      <template v-for="(b, i) in row" :key="i">
        <i v-if="b.name === '|'" class="sep"></i>
        <i v-else-if="b.name === '_'" class="gap"></i>
        <i v-else-if="b.name === '.'" class="gap small"></i>
        <button v-else-if="b.name === '>'" class="drop" :class="{ on: b.on, off: b.off }" aria-label="Options"><i class="tri down"></i></button>
        <button v-else class="tb" :class="{ on: b.on, off: b.off }" :aria-label="b.name"><Ico :n="b.name" /></button>
      </template>
    </div>

    <section class="infobar">
      <div class="sec first">
        <h2>Principal:</h2>
        <div class="line">
          <p class="sel">Sélectionné(s): 1<br />Editable: 1</p>
          <button class="field slabbtn" aria-label="Dalle"><Ico n="slab" class="big" /><i class="tri down"></i></button>
        </div>
      </div>
      <div class="sec">
        <h2>Calque:</h2>
        <div class="line"><button class="field wide"><Ico n="eye" /><span>Structure - Dalles</span><i class="tri"></i></button></div>
      </div>
      <div class="sec">
        <h2>Option de géométrie:</h2>
        <div class="line opts">
          <button class="opt" aria-label="Géométrie 1"><Ico n="geo1" class="big" /></button>
          <button class="opt on" aria-label="Géométrie 2"><Ico n="geo2" class="big" /></button>
          <button class="opt" aria-label="Géométrie 3"><Ico n="geo3" class="big" /></button>
        </div>
      </div>
      <div class="sec">
        <h2>Emplacement de plan de référence:</h2>
        <div class="line opts">
          <button class="opt on" aria-label="Dessus"><Ico n="hatchtop" class="mid" /></button>
          <button class="opt" aria-label="Dessous"><Ico n="hatchbot" class="mid" /></button>
        </div>
      </div>
      <div class="sec">
        <h2>Structure:</h2>
        <div class="line tight">
          <button class="field hatchbtn" aria-label="Hachure"><Ico n="hatch" class="mid" /><i class="tri"></i></button>
          <button class="field matbtn"><Ico n="mat" class="big" /><span>Béton armé (Coul...</span><i class="tri"></i></button>
        </div>
      </div>
      <div class="sec">
        <h2>Plan et Coupe:</h2>
        <div class="line"><button class="field wide"><Ico n="plansec" /><span>Plan et Coupe...</span><i class="tri"></i></button></div>
      </div>
      <div class="sec">
        <h2>Étages liés:</h2>
        <p class="lab">Étage d'implantation :</p>
        <div class="story"><Ico n="story" /><span>1. 1er étage</span><button class="mini" aria-label="Choisir l'étage"><i class="tri"></i></button></div>
      </div>
      <div class="sec">
        <h2>Sommet et base:</h2>
        <div class="line tight">
          <Ico n="height" class="huge" />
          <div class="nums">
            <input aria-label="Sommet" value="0,050" /><input aria-label="Base" value="-0,400" />
          </div>
          <button class="mini tall" aria-label="Plus"><i class="tri"></i></button>
        </div>
      </div>
      <div class="sec last">
        <h2>Angle arête:</h2>
        <div class="line"><button class="opt on" aria-label="Angle perpendiculaire"><Ico n="edge" class="mid" /></button></div>
      </div>
    </section>

    <main class="work">
      <aside class="toolbox">
        <div class="tool free"><Ico n="arrow" /><span>Flèche</span></div>
        <div class="tool free"><Ico n="marquee" /><span>Zone de sélection</span></div>
        <h3>Dessin</h3>
        <div class="tools">
          <button v-for="t in tools" :key="t[0]" class="tool" :class="{ on: t[0] === 'slab' }"><Ico :n="t[0]" :class="{ wideico: t[0] === 'slab' || t[0] === 'mesh' }" /><span>{{ t[1] }}</span></button>
        </div>
        <div class="more"><i></i></div>
        <h3>Pt. vue</h3>
        <h3 class="docu">Docu.</h3>
      </aside>

      <div class="center">
        <div class="tabs">
          <button class="tiles" aria-label="Onglets"><Ico n="tiles" /></button>
          <button class="tab"><Ico n="storytab" /><span>[1. 1er étage]</span></button>
          <button class="tab active"><Ico n="box3d" /><span>[3D / Sélection, Étage 1]</span><Ico n="bigclose" class="x" /></button>
          <button class="navdrop" aria-label="Navigateur"><Ico n="navhouse" class="mid" /><i class="tri down"></i></button>
        </div>
        <svg class="scene" viewBox="111 142 970 509" preserveAspectRatio="xMidYMid slice">
          <defs>
            <linearGradient id="ground" x1="0" y1="0" x2="0" y2="1"><stop offset="0" stop-color="#d6e1ec" /><stop offset="1" stop-color="#d8e2f0" /></linearGradient>
            <linearGradient id="wood" x1="0" y1="0" x2="0" y2="1">
              <stop offset="0" stop-color="#98984a" /><stop offset=".25" stop-color="#9a9d4d" /><stop offset=".5" stop-color="#9b9c4b" /><stop offset=".75" stop-color="#94994d" /><stop offset="1" stop-color="#99a052" />
            </linearGradient>
            <clipPath id="land"><path d="M0 0H998L1027 142L1080 390L1130 700H0z" /></clipPath>
          </defs>
          <path d="M0 0H1400V800H0z" fill="#e2eaea" />
          <g clip-path="url(#land)">
            <path d="M0 0H1400V800H0z" fill="url(#ground)" />
            <path :d="minorGrid" class="minor" />
            <path :d="majorGrid" class="major" />
          </g>
          <path d="M377 255L745 278L744 634L288 598zM447 324L403 541L661 560L672 339z" fill="url(#wood)" fill-rule="evenodd" />
          <path d="M447 326L672 341M405 541L448 327M289 600L743 636" class="green" />
          <path d="M377 255L745 278L744 634L288 598z" class="edge" />
          <path d="M447 324L672 339L661 560L403 541z" class="edge" />
          <path d="M590 468L629 470L626 504L587 501z" fill="#858d9a" />
          <g fill="#080a14">
            <circle v-for="p in [[377, 255], [745, 278], [744, 634], [288, 598], [447, 324], [672, 339], [661, 560], [403, 541]]" :key="p[0]" :cx="p[0]" :cy="p[1]" r="3" />
          </g>
          <path d="M562 436H570M566 432V440" stroke="#333" />
          <g class="handles">
            <path d="M584 143H607V154H584zM584 640H607V651H584zM113 386H123V408H113zM1068 386H1078V408H1068z" />
            <path class="dash" d="M586 149H606M586 645H606M118 387V407M1073 387V407" />
          </g>
          <path class="gizmo" d="M934 631H947V643H934zM934 637H947M941 631V643M938 634L948 629M938 646L948 641" />
        </svg>
        <div class="viewbar">
          <button class="vb" aria-label="Zoom précédent"><Ico n="zback" /></button>
          <button class="vb off" aria-label="Zoom suivant"><Ico n="zfwd" /></button>
          <button class="vb" aria-label="Zoom avant"><Ico n="zin" /></button>
          <div class="pair">
            <button class="vb" aria-label="Orbite"><Ico n="orbit" /></button>
            <button class="vb" aria-label="Explorer"><Ico n="walk" /></button>
          </div>
          <button v-for="(o, i) in options" :key="i" class="cell" :class="{ na: o.off, dim: o.dim }"><Ico :n="o.i" /><span>{{ o.t }}</span><i class="tri"></i></button>
        </div>
      </div>

      <aside class="nav">
        <div class="navtop">
          <button class="field chooser" aria-label="Navigateur"><Ico n="navtop" /><i class="tri"></i></button>
          <button class="mode on" aria-label="Plan du projet"><Ico n="house" /></button>
          <button class="mode" aria-label="Plan de vues"><Ico n="storytab" /></button>
          <button class="mode" aria-label="Carnet de mise en page"><Ico n="layoutbook" /></button>
          <button class="mode" aria-label="Jeux de publication"><Ico n="publish" /></button>
        </div>
        <div class="treewrap">
          <ul class="tree">
            <li v-for="(n, i) in nodes" :key="i" :class="['l' + n.l, { sel: n.sel }]">
              <svg class="chev" viewBox="0 0 8 8"><path v-if="n.open" d="M1 2.500L4 5.500 7 2.500" /></svg>
              <Ico :n="n.i" /><span>{{ n.t }}</span>
            </li>
          </ul>
          <div class="vscroll"><i></i></div>
        </div>
        <div class="hscroll"><i></i></div>
        <div class="acts">
          <button aria-label="Nouvelle vue"><Ico n="viewnew" /></button>
          <button aria-label="Nouveau dossier" class="faint"><Ico n="foldernew" /></button>
          <button aria-label="Supprimer" class="del"><Ico n="close" /></button>
        </div>
        <h3 class="props"><i class="tri down"></i>Propriétés</h3>
        <div class="prow"><Ico n="box3d" /><span>Perspective générique</span></div>
        <button class="field settings">Réglages...</button>
      </aside>
    </main>

    <footer class="foot"><div class="gid"><Ico n="windows" /><span>GRAPHISOFT <em>ID</em></span></div></footer>

    <div class="taskbar">
      <button class="start" aria-label="Démarrer">
        <svg viewBox="0 0 18 18"><path d="M0 0h8.500v8.500H0zM9.500 0H18v8.500H9.500zM0 9.500h8.500V18H0zM9.500 9.500H18V18H9.500z" fill="#4cc2f5" /></svg>
      </button>
      <label class="search">
        <svg viewBox="0 0 14 14"><circle cx="6" cy="6" r="4" /><path d="M9 9l4 4" /></svg>
        <input type="text" placeholder="Rechercher" aria-label="Rechercher" />
      </label>
      <button v-for="a in apps" :key="a.n" class="app" :class="{ active: a.active, run: a.run }" :aria-label="a.n"><svg viewBox="0 0 22 24" v-html="a.svg"></svg></button>
      <div class="tray">
        <svg class="t" viewBox="0 0 16 16"><path d="M4 10l4-4 4 4" fill="none" stroke="#fff" stroke-width="1.500" /></svg>
        <svg class="t" viewBox="0 0 16 16"><path d="M4 13q-3-.5-2.500-3T5 7.500Q7 4 10.500 6q2 1 2 2.500 2.500.5 2 2.500T12 13z" fill="#d8d8d8" /></svg>
        <svg class="t" viewBox="0 0 16 16"><path d="M3 2h3v2H3zM10 2h3v2h-3z" fill="#fff" /><rect x="2" y="5" width="12" height="10" rx="1" fill="#d3152e" /><text x="8" y="12" text-anchor="middle" font-size="6" font-weight="700" fill="#fff">10</text></svg>
        <svg class="t" viewBox="0 0 16 16"><path d="M6.500 3.500q1.500-2.500 3 0v5q-1.500 2.500-3 0zM4 7.500q0 4 4 4t4-4M8 11.500V14.500" fill="none" stroke="#6fb4d4" stroke-width="1.500" /></svg>
        <span class="lang">FRA</span>
        <svg class="n" viewBox="0 0 16 16"><path d="M1.500 6.500q6.500-6 13 0M3.500 9q4.500-4 9 0M5.500 11.500q2.500-2 5 0M8 13.500v1" fill="none" stroke="#eee" stroke-width="1.500" /></svg>
        <svg class="n" viewBox="0 0 16 16"><path d="M2 6.500h2L8 3v10L4 9.500H2zM10 6q1.500 2 0 4M12 4q3 4 0 8M14 2.500q3.500 5.500 0 11" fill="none" stroke="#eee" stroke-width="1.200" /></svg>
        <svg class="n" viewBox="0 0 16 16"><rect x="1" y="4.500" width="12.500" height="8" rx="2" fill="none" stroke="#eee" stroke-width="1.500" /><path d="M3 6.500h8v4H3zM14 7h1.500v3H14z" fill="#eee" /></svg>
        <time>19:33<br />23/04/2025</time>
        <svg class="t" viewBox="0 0 16 16"><path d="M2 12l1.500-2V7q0-4 4.500-4t4.500 4v3l1.500 2zM6 13h4q-2 3-4 0z" fill="#f0f0f0" /><path d="M9 6h4L9 10h4" fill="none" stroke="#444" /></svg>
      </div>
    </div>
  </div>
</template>

<style>
body { background: #000; }
</style>

<style scoped>
* { box-sizing: border-box; margin: 0; padding: 0; }
.screen { display: flex; flex-direction: column; min-height: 100vh; margin: 0 5%; background: #efefef; color: #1c1c1c; font: 8px/10px Roboto, "Open Sans", sans-serif; overflow: hidden; }
button { font: inherit; color: inherit; background: none; border: 0; display: flex; align-items: center; justify-content: center; white-space: nowrap; flex: none; }
h1, h2, h3 { font: inherit; }
i { display: block; }
.ico { width: 16px; height: 16px; flex: none; fill: none; stroke: currentColor; display: block; }
.ico :deep(path) { vector-effect: non-scaling-stroke; }
.tri { width: 0; height: 0; flex: none; border: 3px solid transparent; border-left: 4px solid #111; border-right: 0; }
.tri.down { border: 3px solid transparent; border-top: 4px solid #111; border-bottom: 0; }
.on { background: #c3e2fb; }

.title { height: 17px; display: flex; align-items: center; background: #f3f3f3; padding-left: 1px; gap: 4px; }
.logo { width: 12px; height: 12px; }
.title h1 { font-size: 9px; }
.wctl { margin-left: auto; display: flex; gap: 21px; padding-right: 12px; }
.wctl .ico { width: 14px; height: 14px; }
.menu { height: 15px; display: flex; align-items: center; gap: 11px; background: #fff; padding: 0 1px 0 5px; font-size: 9px; }
.menu button { display: block; }
.dctl { margin-left: auto; display: flex; gap: 1px; }
.dctl .ico { width: 10px; height: 10px; }

.bar { height: 24px; display: flex; align-items: center; padding-left: 3px; color: #333; }
.bar.second { height: 23px; }
.tb { width: 18px; height: 22px; }
.second .tb { width: 20px; }
.drop { width: 15px; height: 22px; }
.off { color: #a9a9a9; }
.drop.off .tri { border-top-color: #888; }
.sep { width: 1px; height: 18px; margin: 0 3px 0 2px; background: #b8b8b8; }
.gap { width: 14px; }
.gap.small { width: 6px; }

.infobar { height: 46px; display: flex; border-top: 1px solid #d9d9d9; background: #f2f2f2; overflow: hidden; }
.sec { width: 139px; flex: none; border-right: 1px solid #bdbdbd; padding: 2px 3px 0 4px; }
.sec.first { width: 142px; padding-left: 7px; }
.sec.last { border-right: 0; flex: 1; min-width: 0; }
.sec h2 { font-size: 7px; line-height: 9px; font-weight: 500; white-space: nowrap; }
.line { display: flex; align-items: center; height: 34px; }
.line.tight { gap: 2px; }
.sel { font-size: 7px; line-height: 8px; flex: 1; }
.field { height: 21px; background: #fff; border: 1px solid #dcdcdc; border-radius: 2px; gap: 2px; }
.big { width: 20px; height: 20px; }
.mid { width: 17px; height: 17px; }
.slabbtn { width: 36px; gap: 6px; }
.wide { width: 131px; padding: 0 3px 0 4px; }
.wide span { flex: 1; text-align: left; }
.opt { width: 33px; height: 22px; border-radius: 2px; }
.hatchbtn { width: 31px; gap: 4px; }
.matbtn { width: 97px; padding: 0 1px; }
.matbtn span { flex: 1; text-align: left; }
.matbtn .tri { margin-right: 2px; }
.lab { margin-top: 4px; }
.story { display: flex; align-items: center; margin-top: 4px; height: 14px; padding-left: 8px; }
.story span { flex: 1; padding-left: 9px; }
.mini { width: 10px; height: 12px; background: #fff; border-radius: 2px; }
.mini.tall { margin-left: auto; height: 16px; }
.huge { width: 28px; height: 28px; }
.nums { display: flex; flex-direction: column; gap: 2px; width: 84px; }
.nums input { width: 84px; height: 14px; border: 0; border-bottom: 1px solid #bbb; background: #fff; font: inherit; padding-left: 3px; color: inherit; }

.work { flex: 1; display: flex; min-height: 0; }
.toolbox { width: 47px; flex: none; display: flex; flex-direction: column; background: #f2f2f2; overflow: hidden; padding-top: 6px; }
.tool { display: flex; align-items: center; justify-content: flex-start; gap: 8px; padding-left: 10px; width: 39px; overflow: hidden; }
.tool .wideico { width: 20px; height: 20px; margin: 0 -2px; }
.tool.free { height: 23px; width: 46px; white-space: nowrap; flex: none; }
.toolbox h3 { height: 14px; line-height: 14px; padding-left: 1px; background: #d8d8d8; flex: none; }
.toolbox h3.docu { height: 16px; line-height: 16px; margin-top: 1px; }
.tools { flex: 1; display: flex; flex-direction: column; }
.tools .tool { flex: 1; }
.more { height: 8px; padding: 5px 0 0 10px; }
.more i { width: 16px; height: 1px; background: #444; }

.center { flex: 1; min-width: 0; display: flex; flex-direction: column; }
.tabs { height: 17px; display: flex; background: #d6d6d6; }
.tiles { width: 19px; background: #e2e2e2; }
.tab { width: 225px; gap: 1px; padding: 0 5px 0 2px; background: #d0d0d0; }
.tab span { flex: 1; text-align: left; }
.tab.active { background: #fff; }
.tab .x { width: 7px; height: 7px; stroke-width: 2; }
.navdrop { margin-left: auto; width: 38px; background: #ececec; gap: 6px; }
.scene { flex: 1; min-height: 0; width: 100%; display: block; }
.minor { fill: none; stroke: #c3cfe3; stroke-width: 1; opacity: .4; }
.major { fill: none; stroke: #b0bee3; stroke-width: 1; opacity: .8; }
.edge { fill: none; stroke: #0a14a6; stroke-width: 2; }
.green { fill: none; stroke: #1f9a63; stroke-width: 2; }
.handles path { fill: #dcdfe3; opacity: .7; }
.handles .dash { fill: none; stroke: #ee9a6c; stroke-width: 2; stroke-dasharray: 4 1; opacity: 1; }
.gizmo { fill: none; stroke: #5a7be0; stroke-dasharray: 3 1; }
.viewbar { height: 17px; display: flex; align-items: center; background: #f2f2f2; overflow: hidden; }
.vb { width: 17px; height: 16px; }
.viewbar .ico { width: 14px; height: 14px; }
.pair { display: flex; border-left: 1px solid #bbb; margin-left: 2px; padding: 0 2px; }
.cell { width: 90px; height: 16px; border-left: 1px solid #bbb; padding: 0 4px 0 3px; }
.cell span { flex: 1; text-align: center; }
.cell.na span { color: #999; }
.cell.na .tri { border-left-color: #aaa; }
.cell.dim .ico { color: #aaa; }

.nav { width: 135px; flex: none; display: flex; flex-direction: column; background: #f2f2f2; }
.navtop { height: 32px; display: flex; align-items: center; padding: 6px 0 0 2px; }
.chooser { width: 33px; margin-right: 9px; gap: 6px; }
.mode { width: 23px; height: 21px; border-radius: 2px; }
.treewrap { flex: 1; display: flex; min-height: 0; }
.tree { width: 122px; list-style: none; background: #fff; display: flex; flex-direction: column; overflow: hidden; }
.tree li { flex: 1; display: flex; align-items: center; white-space: nowrap; padding-left: 4px; }
.tree li.l1 { padding-left: 12px; }
.tree li.l2 { padding-left: 20px; }
.tree li.sel { background: #d4d4d4; font-weight: 700; }
.tree .ico { margin-right: 2px; }
.chev { width: 8px; height: 8px; margin-right: 2px; flex: none; fill: none; stroke: #222; stroke-width: 1.200; }
.vscroll { flex: 1; padding: 12px 0 0 5px; }
.vscroll i { width: 2px; height: 158px; background: #7c7c7c; }
.hscroll { height: 12px; padding: 4px 0 0 13px; }
.hscroll i { width: 48px; height: 2px; background: #8a8a8a; }
.acts { height: 24px; display: flex; align-items: center; justify-content: flex-end; gap: 6px; padding-right: 5px; }
.faint { color: #b5b5b5; }
.del { color: #e79182; }
.props { height: 17px; line-height: 17px; margin: 0 3px 0 2px; background: #d4d4d4; display: flex; align-items: center; gap: 7px; padding-left: 5px; }
.nav .props { font-size: 8px; }
.prow { height: 19px; display: flex; align-items: center; justify-content: space-between; padding: 0 11px 0 3px; }
.prow .ico { width: 12px; height: 12px; }
.settings { height: 16px; margin: 1px 3px 2px 2px; }

.foot { height: 16px; display: flex; justify-content: flex-end; border-top: 1px solid #dcdcdc; background: #f2f2f2; }
.gid { width: 135px; display: flex; align-items: center; gap: 13px; padding-left: 2px; color: #444; }
.gid span { color: #8f8f8f; font: 10px/14px Lato, sans-serif; }
.gid em { font-style: normal; color: #b3b3b3; }

.taskbar { height: 36px; flex: none; display: flex; align-items: center; background: #1f1f1f; color: #fff; padding-left: 13px; }
.start svg { width: 18px; height: 18px; display: block; }
.search { width: 164px; height: 24px; margin: 0 2px 0 11px; border-radius: 12px; background: #f4f4f4; display: flex; align-items: center; gap: 6px; padding-left: 7px; }
.search svg { width: 14px; height: 14px; fill: none; stroke: #222; stroke-width: 1.500; flex: none; }
.search input { border: 0; background: none; width: 100%; min-width: 0; font: 10px/14px Roboto, sans-serif; color: #555; outline: 0; }
.search input::placeholder { color: #666; opacity: 1; }
.app { width: 31px; height: 34px; margin: 0 1px; border-radius: 3px; position: relative; }
.app svg { width: 20px; height: 22px; display: block; overflow: visible; }
.app.active { background: #303236; }
.app.run::after, .app.active::after { content: ""; position: absolute; bottom: 1px; left: 50%; width: 4px; height: 2px; margin-left: -2px; border-radius: 1px; background: #9a9a9a; }
.app.active::after { width: 12px; margin-left: -6px; background: #5cc0f0; }
.tray { margin-left: auto; display: flex; align-items: center; padding-right: 8px; }
.t { width: 16px; height: 16px; margin: 0 4px; }
.n { width: 14px; height: 14px; margin: 0 2px; }
.lang { font-size: 9px; margin: 0 11px 0 8px; }
time { font-size: 9px; line-height: 12px; text-align: right; margin: 0 0 0 9px; }
</style>
